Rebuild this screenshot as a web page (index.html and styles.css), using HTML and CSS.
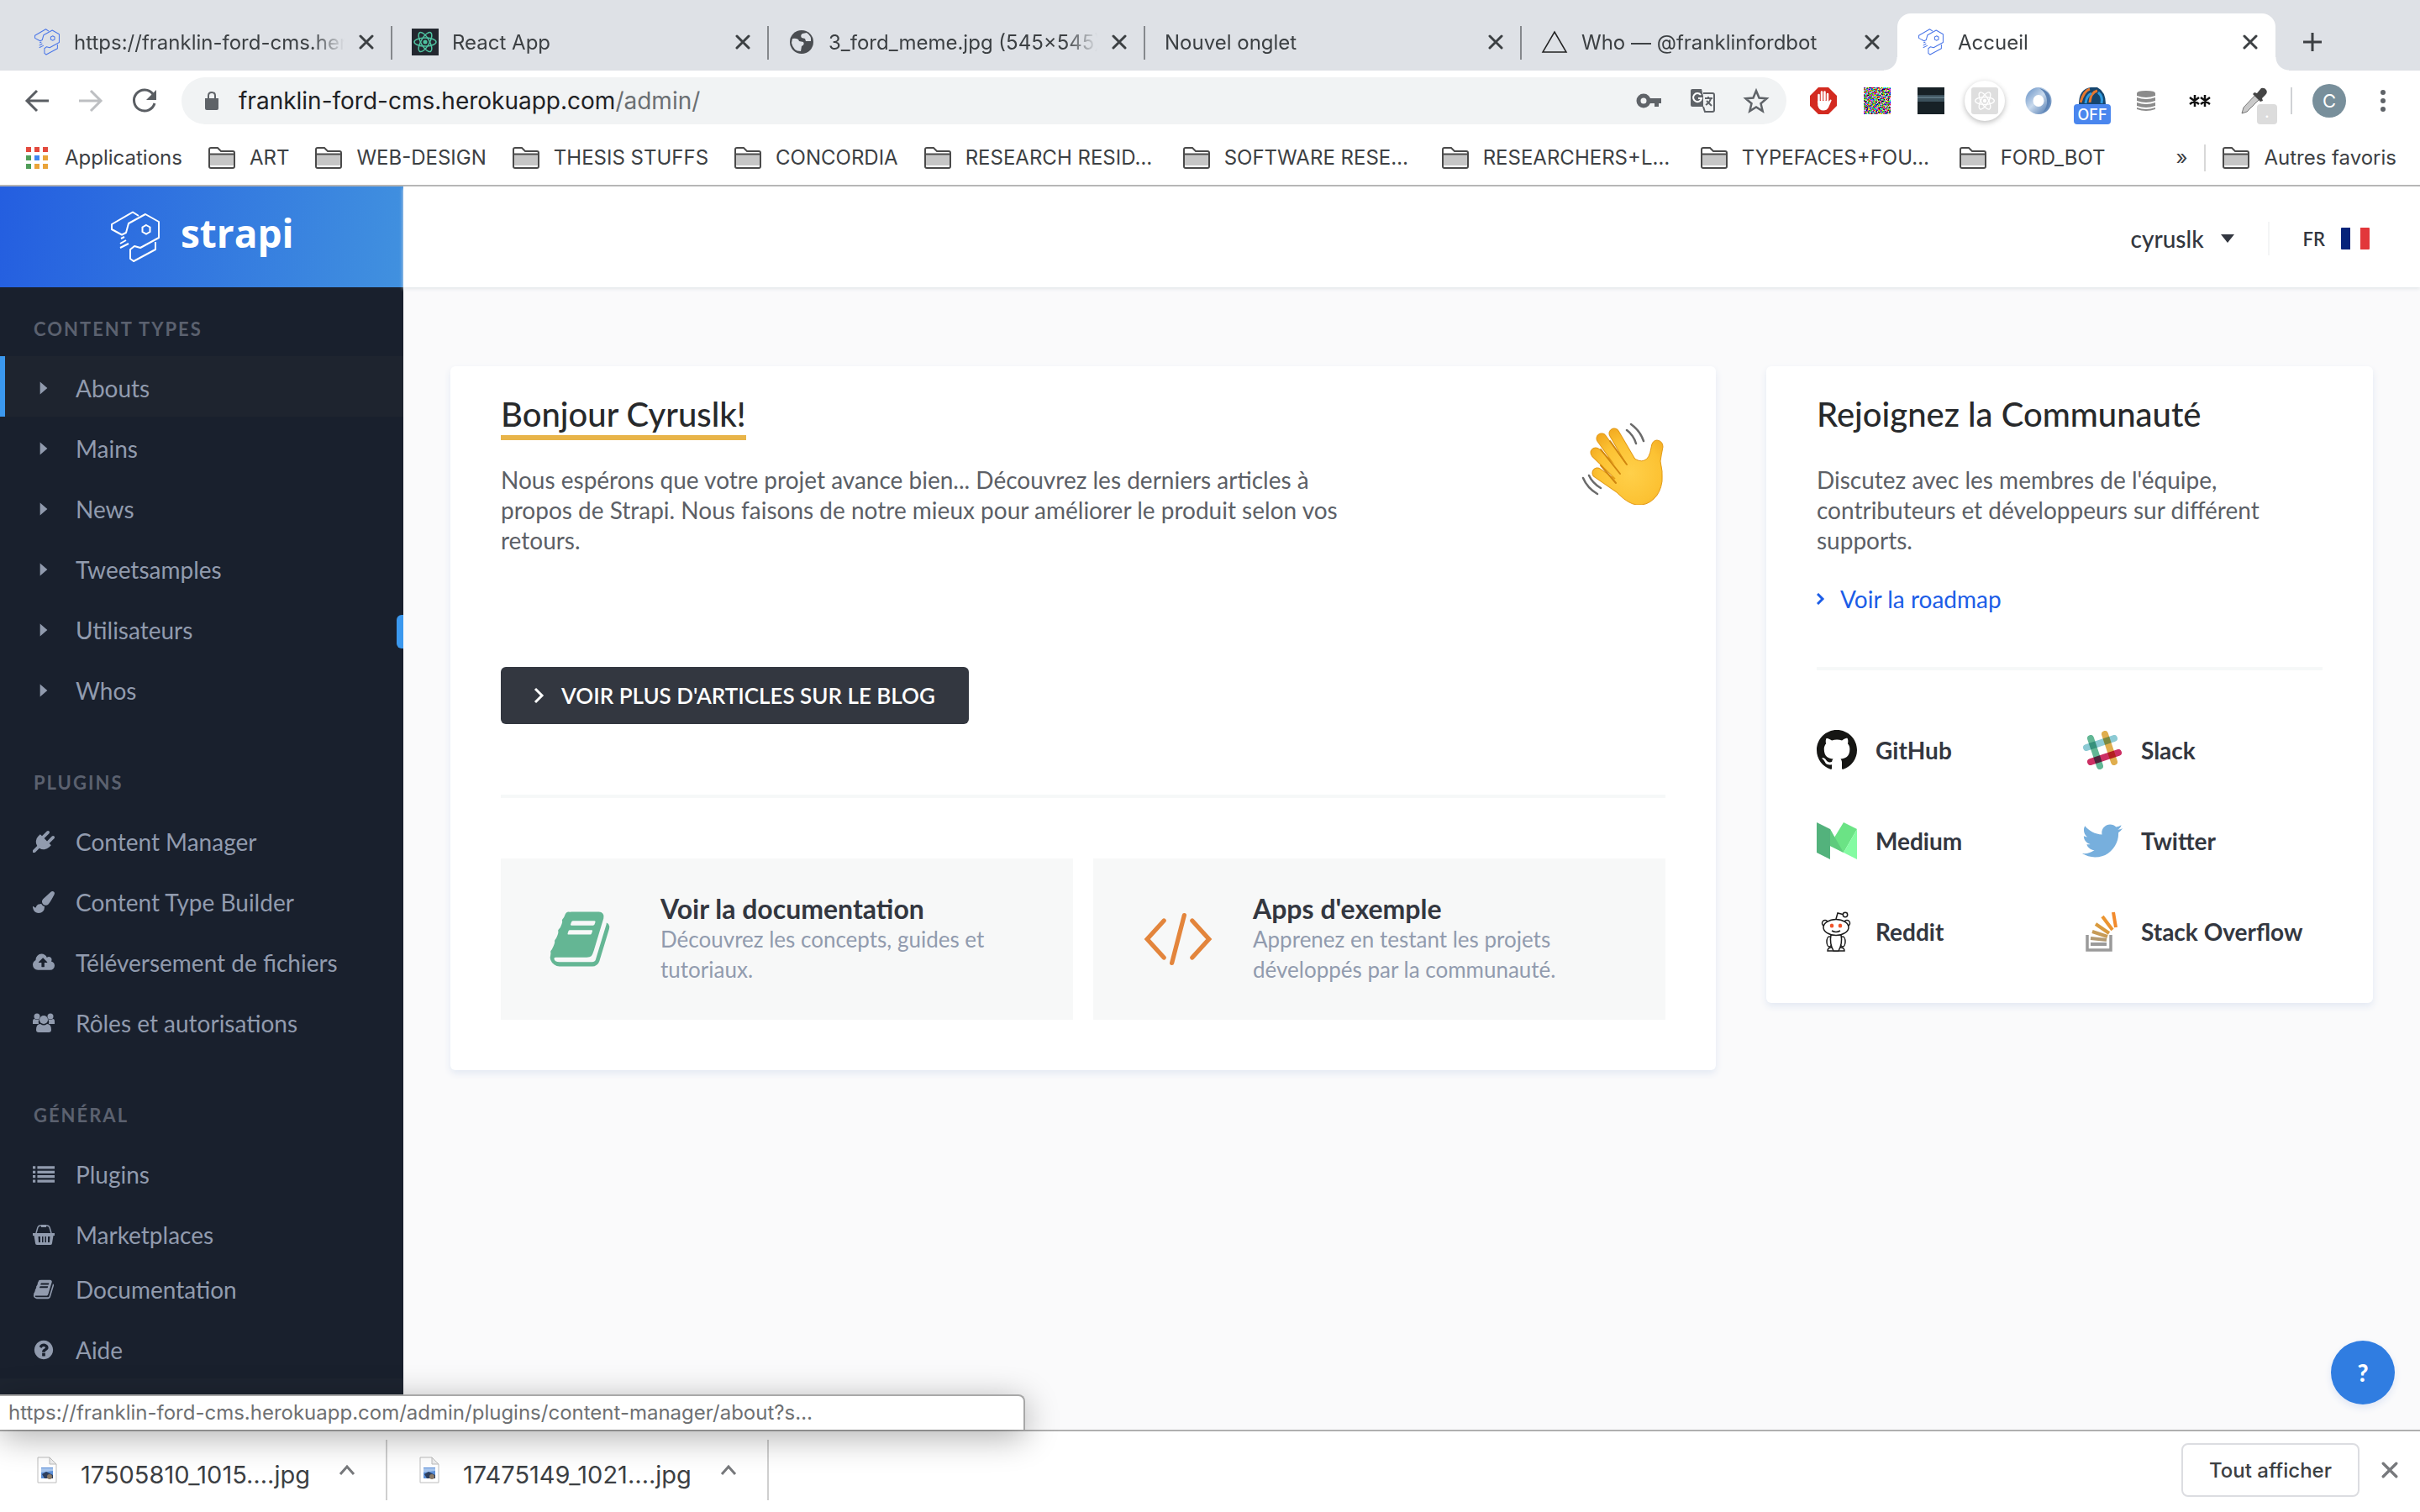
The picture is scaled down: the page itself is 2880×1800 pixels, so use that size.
FILE: index.html
```html
<!DOCTYPE html>
<html lang="fr">
<head>
<meta charset="utf-8">
<meta name="viewport" content="width=device-width, initial-scale=1">
<title>Accueil</title>
<link rel="stylesheet" href="styles.css">
</head>
<body>
<svg class="sprite" aria-hidden="true">
  <defs>
    <symbol id="i-close" viewBox="0 0 18 18"><path d="M2 2l14 14M16 2L2 16" fill="none" stroke="currentColor" stroke-width="3" stroke-linecap="round"/></symbol>
    <symbol id="i-strapi" viewBox="0 0 60 62"><path d="M34 6L27 1.500 2 16V22L14 28.500 19 26 22 15 42 4 58 13V32L36 44 29 42 24 46V57L28 60 54 46V37" fill="none" stroke="currentColor" stroke-width="2" stroke-linejoin="round"/><path d="M43 17l4.500 2.500v5.500L43 27.500 38.500 25v-5.500z" fill="none" stroke="currentColor" stroke-width="2"/><path d="M13 33l4-2M12 39l7-4M12 44l10-5" fill="none" stroke="currentColor" stroke-width="2"/></symbol>
    <symbol id="i-folder" viewBox="0 0 32 26"><path d="M1 3a2 2 0 0 1 2-2h8l4 4h14a2 2 0 0 1 2 2v16a2 2 0 0 1-2 2H3a2 2 0 0 1-2-2z" fill="#fff" stroke="#4a4a4a" stroke-width="2"/><path d="M2 9h28v13H2z" fill="#c6c6c6"/><path d="M1 8.500h30" stroke="#4a4a4a" stroke-width="2"/></symbol>
    <symbol id="i-caret" viewBox="0 0 24 24"><path d="M8 5l8 7-8 7z" fill="currentColor"/></symbol>
    <symbol id="i-plug" viewBox="0 0 1792 1792"><path fill="currentColor" d="M1755 453q37 38 37 90.500t-37 90.500l-401 400 150 150-160 160q-163 163-389.500 186.500t-411.500-100.500l-362 362h-181v-181l362-362q-124-185-100.500-411.500t186.500-389.500l160-160 150 150 400-401q38-37 91-37t90 37 37 90.500-37 90.500l-400 401 234 234 401-400q38-37 91-37t90 37z"/></symbol>
    <symbol id="i-brush" viewBox="0 0 1792 1792"><path fill="currentColor" d="M1615 0q70 0 122.500 46.500t52.500 116.500q0 63-45 151-332 629-465 752-97 91-218 91-126 0-216.500-92.500t-90.500-219.500q0-128 92-212l638-579q59-54 130-54zm-909 1034q39 76 106.500 130t150.500 76l1 71q4 213-129.500 347t-348.500 134q-123 0-218-46.500t-152.500-127.500-86.500-183-29-220q7 5 41 30t62 44.500 59 36.500 46 17q41 0 55-37 25-66 57.500-112.500t69.500-76 88-47.500 103-25.500 125-10.500z"/></symbol>
    <symbol id="i-cloud" viewBox="-64 0 1920 1792"><path fill="currentColor" d="M1216 864q0-14-9-23l-352-352q-9-9-23-9t-23 9l-351 351q-10 12-10 24 0 14 9 23t23 9h224v352q0 13 9.500 22.500t22.500 9.500h192q13 0 22.500-9.500t9.500-22.500v-352h224q13 0 22.500-9.500t9.500-22.500zm640 288q0 159-112.500 271.500t-271.500 112.500h-1088q-185 0-316.500-131.500t-131.500-316.500q0-130 70-240t188-165q-2-30-2-43 0-212 150-362t362-150q156 0 285.500 87t188.500 231q71-62 166-62 106 0 181 75t75 181q0 76-41 138 130 31 213.500 135.500t83.500 238.500z"/></symbol>
    <symbol id="i-users" viewBox="0 0 26 24"><g fill="currentColor"><circle cx="5" cy="4" r="3.500"/><circle cx="21" cy="4" r="3.500"/><path d="M0 13V10q0-3 2-3 3 2 6 0-2 3-1 6zM26 13V10q0-3-2-3-3 2-6 0 2 3 1 6z"/><circle cx="13" cy="8" r="5"/><path d="M4 20q0-7 5-7 4 3 8 0 5 0 5 7 0 3-3 3H7q-3 0-3-3z"/></g></symbol>
    <symbol id="i-list" viewBox="0 0 24 24"><path d="M0 3h3v3H0zM5 3h19v3H5zM0 8h3v3H0zM5 8h19v3H5zM0 13h3v3H0zM5 13h19v3H5zM0 18h3v3H0zM5 18h19v3H5z" fill="currentColor"/></symbol>
    <symbol id="i-basket" viewBox="0 0 26 24"><path d="M0 10h26v3h-1.500l-1.500 9q0 2-2 2H5q-2 0-2-2L1.500 13H0zm6.500 4l.5 7h2v-7zm4.500 0v7h1.500v-7zm3.500 0v7H16v-7zm3.500 0v7h2l.5-7z" fill="currentColor" fill-rule="evenodd"/><path d="M4 10L6 3q1-2 3-2h8q2 0 3 2l2 7" fill="none" stroke="currentColor" stroke-width="1.500"/><path d="M10 0h6v3h-6z" fill="currentColor"/></symbol>
    <symbol id="i-book" viewBox="0 0 1792 1792"><path fill="currentColor" d="M1703 478q40 57 18 129l-275 906q-19 64-76.500 107.500t-122.500 43.500h-923q-77 0-148.500-53.500t-99.500-131.500q-24-67-2-127 0-4 3-27t4-37q1-8-3-21.500t-3-19.500q2-11 8-21t16.500-23.500 16.500-23.500q23-38 45-91.500t30-91.500q3-10 .5-30t-.5-28q3-11 17-28t17-23q21-36 42-92t25-90q1-9-2.500-32t.5-28q4-13 22-30.500t22-22.500q19-26 42.500-84.500t27.500-96.500q1-8-3-25.500t-2-26.500q2-8 9-18t18-23 17-21q8-12 16.500-30.500t15-35 16-36 19.500-32 26.500-23.500 36-11.500 47.500 5.500l-1 3q38-9 51-9h761q74 0 114 56t18 130l-274 906q-36 119-71.500 153.500t-128.500 34.500h-869q-27 0-38 15-11 16-1 43 24 70 144 70h923q29 0 56-15.500t35-41.500l300-987q7-22 5-57 38 15 59 43zm-1064 2q-4 13 2 22.500t20 9.500h608q13 0 25.500-9.500t16.500-22.500l21-64q4-13-2-22.500t-20-9.500h-608q-13 0-25.500 9.500t-16.500 22.500zm-83 256q-4 13 2 22.500t20 9.500h608q13 0 25.500-9.500t16.500-22.500l21-64q4-13-2-22.500t-20-9.500h-608q-13 0-25.500 9.500t-16.500 22.500z"/></symbol>
    <symbol id="i-help" viewBox="0 0 1792 1792"><path fill="currentColor" d="M1024 1376v-192q0-14-9-23t-23-9h-192q-14 0-23 9t-9 23v192q0 14 9 23t23 9h192q14 0 23-9t9-23zm256-672q0-88-55.500-163t-138.500-116-170-41q-243 0-371 213-15 24 8 42l132 100q7 6 19 6 16 0 25-12 53-68 86-92 34-24 86-24 48 0 85.500 26t37.500 59q0 38-20 61t-68 45q-63 28-115.500 86.500t-52.500 125.500v36q0 14 9 23t23 9h192q14 0 23-9t9-23q0-19 21.500-49.500t54.500-49.500q32-18 49-28.500t46-35 44.500-48 28-60.500 12.500-81zm384 192q0 209-103 385.500t-279.500 279.500-385.500 103-385.500-103-279.500-279.500-103-385.500 103-385.500 279.500-279.500 385.500-103 385.500 103 279.500 279.500 103 385.500z"/></symbol>
    <symbol id="i-atom" viewBox="0 0 32 32"><g fill="none" stroke="currentColor" stroke-width="1.500"><ellipse cx="16" cy="16" rx="13" ry="5"/><ellipse cx="16" cy="16" rx="13" ry="5" transform="rotate(60 16 16)"/><ellipse cx="16" cy="16" rx="13" ry="5" transform="rotate(120 16 16)"/></g><circle cx="16" cy="16" r="2.500" fill="currentColor"/></symbol>
    <symbol id="i-jpg" viewBox="0 0 24 32"><path d="M1 1h14l8 8v22H1z" fill="#fff" stroke="#bdbdbd"/><path d="M15 1v8h8z" fill="#eee" stroke="#bdbdbd"/><path d="M5 13h14v13H5z" fill="#5b8fd8"/><path d="M5 14h14v3l-14 2z" fill="#a8c6ee"/><path d="M6 21l5-3 8 4v4H9z" fill="#2d3f5e"/><circle cx="15" cy="24" r="3" fill="#8a7a68"/></symbol>
    <symbol id="i-up" viewBox="0 0 20 14"><path d="M2 12l8-9 8 9" fill="none" stroke="currentColor" stroke-width="3"/></symbol>
    <symbol id="i-chevron" viewBox="0 0 14 20"><path d="M3 2l8 8-8 8" fill="none" stroke="currentColor" stroke-width="3"/></symbol>
  </defs>
</svg>

<div class="window">
  <header class="browser">
    <div class="tabs" role="tablist">
      <div class="tab" role="tab"><svg class="tab-icon strapi-blue"><use href="#i-strapi"/></svg><span class="tab-title">https://franklin-ford-cms.her</span><button class="tab-close" aria-label="Fermer"><svg><use href="#i-close"/></svg></button></div>
      <div class="tab" role="tab"><svg class="tab-icon react-tile"><use href="#i-atom"/></svg><span class="tab-title">React App</span><button class="tab-close" aria-label="Fermer"><svg><use href="#i-close"/></svg></button></div>
      <div class="tab" role="tab"><svg class="tab-icon" viewBox="0 0 32 32"><circle cx="16" cy="16" r="14" fill="#4a4d51"/><path d="M5 12q7-1 8 3l5 1q2 3-2 5l-1 6q-9 0-11-10zM17 6q-3 2-1 5l4 1 1 3 6 0q1-6-5-10z" fill="#dee1e6"/></svg><span class="tab-title">3_ford_meme.jpg (545×545)</span><button class="tab-close" aria-label="Fermer"><svg><use href="#i-close"/></svg></button></div>
      <div class="tab" role="tab"><span class="tab-title">Nouvel onglet</span><button class="tab-close" aria-label="Fermer"><svg><use href="#i-close"/></svg></button></div>
      <div class="tab" role="tab"><svg class="tab-icon" viewBox="0 0 32 32"><path d="M16 4l14 24H2z" fill="none" stroke="#222" stroke-width="1.500"/></svg><span class="tab-title">Who — @franklinfordbot</span><button class="tab-close" aria-label="Fermer"><svg><use href="#i-close"/></svg></button></div>
      <div class="tab tab-active" role="tab" aria-selected="true"><svg class="tab-icon strapi-blue"><use href="#i-strapi"/></svg><span class="tab-title">Accueil</span><button class="tab-close" aria-label="Fermer"><svg><use href="#i-close"/></svg></button></div>
      <button class="new-tab" aria-label="Nouvel onglet"><svg viewBox="0 0 24 24"><path d="M12 1v22M1 12h22" stroke="currentColor" stroke-width="3"/></svg></button>
    </div>

    <div class="toolbar">
      <div class="nav-buttons">
        <button aria-label="Retour"><svg viewBox="0 0 32 32"><path d="M30 16H4M16 4L4 16l12 12" fill="none" stroke="#5a5e63" stroke-width="3"/></svg></button>
        <button aria-label="Avancer"><svg viewBox="0 0 32 32"><path d="M2 16h26M16 4l12 12-12 12" fill="none" stroke="#bdbfc2" stroke-width="3"/></svg></button>
        <button aria-label="Actualiser"><svg viewBox="0 0 32 32"><path d="M26 8A12.500 12.500 0 1 0 28 19" fill="none" stroke="#5a5e63" stroke-width="3"/><path d="M30 3v12H18z" fill="#5a5e63"/></svg></button>
      </div>
      <div class="omnibox">
        <svg class="lock" viewBox="0 0 16 22"><path d="M0 8h16v12q0 2-2 2H2q-2 0-2-2z" fill="#5f6368"/><path d="M4 9V5q0-4 4-4t4 4v4" fill="none" stroke="#5f6368" stroke-width="2"/></svg>
        <a class="url" href="#">franklin-ford-cms.herokuapp.com<span>/admin/</span></a>
        <div class="omni-actions">
          <svg viewBox="0 0 32 32"><circle cx="10" cy="16" r="6" fill="none" stroke="#5f6368" stroke-width="5"/><path d="M16 13h15v6h-3v4h-5v-4h-7z" fill="#5f6368"/></svg>
          <svg viewBox="0 0 32 32"><path d="M4 2h11l5 21H4q-2 0-2-2V4q0-2 2-2z" fill="#5f6368"/><path d="M17 7h11q2 0 2 2v18q0 2-2 2H19l-2-6" fill="#f1f3f4" stroke="#5f6368" stroke-width="2"/><path d="M14 9a5 5 0 1 0 1 4h-4" fill="none" stroke="#fff" stroke-width="2"/><path d="M19 13h9M23 11v2M26 13q-1 5-6 8M21 16l6 6" fill="none" stroke="#5f6368" stroke-width="2"/></svg>
          <svg viewBox="0 0 32 32"><path d="M16 4l3.500 8.500 9 .7-7 6 2.200 9L16 23.400 8.300 28.200l2.200-9-7-6 9-.7z" fill="none" stroke="#5f6368" stroke-width="2.500"/></svg>
        </div>
      </div>
      <div class="extensions">
        <svg viewBox="0 0 32 32"><path d="M10 0h12l10 10v12L22 32H10L0 22V10z" fill="#d32a20"/><path d="M10.500 18V9M14 15V5.500M17.500 15V5.500M21 17V8" stroke="#fff" stroke-width="2.500" stroke-linecap="round"/><path d="M9.250 16h13v1l2-2.500q2 0 1 2L22 24q-2 3.500-6 3.500-5.500 0-6.750-6z" fill="#fff"/></svg>
        <svg viewBox="0 0 32 32"><filter id="noise" x="0" y="0" width="1" height="1" color-interpolation-filters="sRGB"><feTurbulence type="fractalNoise" baseFrequency=".55" numOctaves="2"/><feColorMatrix values="4 0 0 0 -1.500 0 4 0 0 -1.500 0 0 4 0 -1.500 0 0 0 0 1"/></filter><rect width="32" height="32" filter="url(#noise)"/></svg>
        <svg viewBox="0 0 32 32"><rect width="32" height="32" fill="#172126"/><rect y="9" width="32" height="8" fill="#3b505b"/><rect y="11" width="32" height="2" fill="#5b7480"/></svg>
        <svg class="ext-round" viewBox="0 0 48 48"><rect x="8" y="8" width="32" height="32" rx="3" fill="#dedede"/><use href="#i-atom" x="10" y="10" width="28" height="28" color="#fff"/></svg>
        <svg viewBox="0 0 32 32"><defs><linearGradient id="ring" x1="0" y1="0" x2="1" y2="1"><stop offset="0" stop-color="#7fa3cf"/><stop offset=".45" stop-color="#c9daed"/><stop offset="1" stop-color="#5f86b8"/></linearGradient></defs><ellipse cx="16" cy="16" rx="11" ry="11.500" fill="none" stroke="url(#ring)" stroke-width="9"/><path d="M17 1q14 3 13 16-2 9-9 13 6-7 5-15-1-9-9-14z" fill="#5b82b4"/></svg>
        <span class="ext-badged"><svg viewBox="0 0 32 20"><path d="M0 20Q0 2 14 0h8q10 5 10 20z" fill="#15466f"/><path d="M2 18q4-14 11-16M13 18q1-12 9-14" fill="none" stroke="#e8772d" stroke-width="3"/><path d="M8 19q1-9 7-12M23 6q6 5 4 13" fill="none" stroke="#2f9be0" stroke-width="3"/></svg><b>OFF</b></span>
        <svg viewBox="0 0 32 32"><g fill="#8b8b8b"><path d="M5 7q0-3 11-3t11 3v3q-11 4-22 0zM5 12q11 4 22 0v4q-11 4-22 0zM5 18q11 4 22 0v4q-11 4-22 0zM5 24q11 4 22 0v2q-11 4-22 0z"/></g></svg>
        <svg viewBox="0 0 32 32"><path d="M10 9v14M4 12l11 8M15 12L4 20M22 9v14M17 12l11 8M28 12l-11 8" stroke="#111" stroke-width="2.500"/></svg>
        <span class="ext-picker"><svg viewBox="0 0 32 32"><path d="M19 8l5 5L8 29l-6 2 2-7z" fill="#c9c9c9" stroke="#777"/><path d="M17 6l3 1 5-6q4-1 6 2t-1 6l-4 4 1 3-3 1-9-9z" fill="#444"/></svg><i>.</i></span>
      </div>
      <div class="profile"><span class="avatar">C</span><svg viewBox="0 0 32 32"><g fill="#5f6368"><circle cx="16" cy="6" r="3"/><circle cx="16" cy="16" r="3"/><circle cx="16" cy="26" r="3"/></g></svg></div>
    </div>

    <nav class="bookmarks">
      <a class="bookmark apps" href="#"><svg viewBox="0 0 26 26"><g fill="#e34a3e"><path d="M0 0h6v6H0zM10 0h6v6h-6zM20 0h6v6h-6z"/></g><path d="M0 10h6v6H0zM0 20h6v6H0z" fill="#4f9d58"/><path d="M10 10h6v6h-6z" fill="#3f86f0"/><path d="M20 10h6v6h-6zM10 20h6v6h-6zM20 20h6v6h-6z" fill="#eaa43a"/></svg><span>Applications</span></a>
      <a class="bookmark" href="#"><svg><use href="#i-folder"/></svg><span>ART</span></a>
      <a class="bookmark" href="#"><svg><use href="#i-folder"/></svg><span>WEB-DESIGN</span></a>
      <a class="bookmark" href="#"><svg><use href="#i-folder"/></svg><span>THESIS STUFFS</span></a>
      <a class="bookmark" href="#"><svg><use href="#i-folder"/></svg><span>CONCORDIA</span></a>
      <a class="bookmark long" href="#"><svg><use href="#i-folder"/></svg><span>RESEARCH RESID…</span></a>
      <a class="bookmark long" href="#"><svg><use href="#i-folder"/></svg><span>SOFTWARE RESE…</span></a>
      <a class="bookmark long" href="#"><svg><use href="#i-folder"/></svg><span>RESEARCHERS+L…</span></a>
      <a class="bookmark long" href="#"><svg><use href="#i-folder"/></svg><span>TYPEFACES+FOU…</span></a>
      <a class="bookmark" href="#"><svg><use href="#i-folder"/></svg><span>FORD_BOT</span></a>
      <div class="bookmarks-end"><button class="more">»</button><a class="bookmark" href="#"><svg><use href="#i-folder"/></svg><span>Autres favoris</span></a></div>
    </nav>
  </header>

  <div class="page">
    <aside class="sidebar">
      <a class="brand" href="#"><svg><use href="#i-strapi"/></svg><span>strapi</span></a>
      <nav class="menu">
        <h2>Content Types</h2>
        <ul>
          <li><a class="current" href="#"><svg><use href="#i-caret"/></svg>Abouts</a></li>
          <li><a href="#"><svg><use href="#i-caret"/></svg>Mains</a></li>
          <li><a href="#"><svg><use href="#i-caret"/></svg>News</a></li>
          <li><a href="#"><svg><use href="#i-caret"/></svg>Tweetsamples</a></li>
          <li><a href="#"><svg><use href="#i-caret"/></svg>Utilisateurs</a><i class="handle"></i></li>
          <li><a href="#"><svg><use href="#i-caret"/></svg>Whos</a></li>
        </ul>
        <h2>Plugins</h2>
        <ul>
          <li><a href="#"><svg><use href="#i-plug"/></svg>Content Manager</a></li>
          <li><a href="#"><svg><use href="#i-brush"/></svg>Content Type Builder</a></li>
          <li><a href="#"><svg><use href="#i-cloud"/></svg>Téléversement de fichiers</a></li>
          <li><a href="#"><svg><use href="#i-users"/></svg>Rôles et autorisations</a></li>
        </ul>
        <h2>Général</h2>
        <ul>
          <li><a href="#"><svg><use href="#i-list"/></svg>Plugins</a></li>
          <li><a href="#"><svg><use href="#i-basket"/></svg>Marketplaces</a></li>
        </ul>
        <ul class="static-links">
          <li><a href="#"><svg><use href="#i-book"/></svg>Documentation</a></li>
          <li><a href="#"><svg><use href="#i-help"/></svg>Aide</a></li>
        </ul>
      </nav>
      <div class="sidebar-foot"></div>
    </aside>

    <div class="admin">
      <header class="topbar">
        <button class="user">cyruslk<svg viewBox="0 0 16 10"><path d="M0 0h16L8 10z" fill="currentColor"/></svg></button>
        <button class="locale">FR<svg viewBox="0 0 34 26"><path d="M1 0h10v26H1q-1 0-1-1V1q0-1 1-1z" fill="#06247a"/><path d="M23 0h10q1 0 1 1v24q0 1-1 1H23z" fill="#e2373b"/></svg></button>
      </header>
      <main class="content">
        <section class="card welcome">
          <svg class="wave" viewBox="0 0 98 98">
            <defs><radialGradient id="skin" gradientUnits="userSpaceOnUse" cx="58" cy="60" r="62"><stop offset="0" stop-color="#ffd04a"/><stop offset=".6" stop-color="#fcc233"/><stop offset="1" stop-color="#f0a41c"/></radialGradient></defs>
            <g fill="none" stroke-linecap="round" stroke="#e39a17" stroke-width="13"><path d="M39 13L63 54M24 19L55 62M17 36L50 68M19 60L48 80"/></g>
            <path d="M59 40q10 8 16 5 6-2 8-15 1-9 7-9 7 1 7 8-2 10-3 17 3 12 2 24-2 14-10 21-8 8-20 7-10-1-22-13l-10-10z" fill="url(#skin)" stroke="#e39a17" stroke-width="1"/>
            <g fill="none" stroke-linecap="round" stroke="url(#skin)" stroke-width="11"><path d="M39 13L63 54M24 19L55 62M17 36L50 68M19 60L48 80"/></g>
            <g fill="none" stroke="#d0860f" stroke-width="2" stroke-linecap="round"><path d="M34 22L54 50M23 32L46 61M23 51L41 72"/></g>
            <g fill="none" stroke="#6b6b6b" stroke-width="2.500" stroke-linecap="round"><path d="M54 9q8 6 11 16M59 2q11 8 15 20M2 66q5 12 17 19M9 63q4 9 14 15"/></g>
          </svg>
          <h1><span>Bonjour Cyruslk!</span></h1>
          <p class="lead">Nous espérons que votre projet avance bien... Découvrez les derniers articles à propos de Strapi. Nous faisons de notre mieux pour améliorer le produit selon vos retours.</p>
          <a class="blog-button" href="#"><svg><use href="#i-chevron"/></svg>VOIR PLUS D'ARTICLES SUR LE BLOG</a>
          <hr>
          <div class="blocks">
            <a class="block" href="#"><svg class="green"><use href="#i-book"/></svg><div><h2>Voir la documentation</h2><p>Découvrez les concepts, guides et tutoriaux.</p></div></a>
            <a class="block" href="#"><svg class="orange" viewBox="0 0 78 60"><path d="M23 9L4 30l19 21M55 9l19 21-19 21M46 3L32 57" fill="none" stroke="currentColor" stroke-width="5" stroke-linecap="round"/></svg><div><h2>Apps d'exemple</h2><p>Apprenez en testant les projets développés par la communauté.</p></div></a>
          </div>
        </section>

        <section class="card community">
          <h1>Rejoignez la Communauté</h1>
          <p class="lead">Discutez avec les membres de l'équipe, contributeurs et développeurs sur différent supports.</p>
          <a class="roadmap" href="#"><svg viewBox="0 0 10 14"><path d="M1 1l6 6-6 6" fill="none" stroke="currentColor" stroke-width="3"/></svg>Voir la roadmap</a>
          <hr>
          <div class="social">
            <a href="#"><svg viewBox="0 0 16 16"><path fill="#161614" d="M8 0C3.580 0 0 3.580 0 8c0 3.540 2.290 6.530 5.470 7.590.4.070.55-.17.55-.38 0-.19-.01-.82-.01-1.490-2.010.37-2.530-.49-2.690-.94-.09-.23-.48-.94-.82-1.130-.28-.15-.68-.52-.01-.53.63-.01 1.080.58 1.230.82.72 1.210 1.870.87 2.330.66.07-.52.28-.87.51-1.070-1.780-.2-3.640-.89-3.640-3.950 0-.87.31-1.590.82-2.150-.08-.2-.36-1.020.08-2.120 0 0 .67-.21 2.200.82.64-.18 1.320-.27 2-.27s1.360.09 2 .27c1.530-1.040 2.200-.82 2.200-.82.44 1.100.16 1.920.08 2.120.51.56.82 1.270.82 2.150 0 3.070-1.870 3.750-3.650 3.950.29.25.54.73.54 1.480 0 1.070-.01 1.930-.01 2.200 0 .21.15.46.55.38A8.010 8.010 0 0 0 16 8c0-4.420-3.580-8-8-8z"/></svg>GitHub</a>
            <a href="#"><svg class="slack" viewBox="0 0 48 48"><g fill="none" stroke-width="8" stroke-linecap="round"><path d="M10 10L21 43" stroke="#62b795"/><path d="M27 5L38 38" stroke="#e0ae4e"/><path d="M5 21L38 10" stroke="#8ccad4"/><path d="M10 38L43 27" stroke="#cc2f63"/></g></svg>Slack</a>
            <a href="#"><svg viewBox="0 -2 48 48"><path d="M0 0l16 8v36L0 36z" fill="#53b27c"/><path d="M32 0l16 8-16 28-16-8V8l5 10z" fill="#6be385"/><path d="M16 8l16 28-16-8z" fill="#5fcb7d"/><path d="M48 8v36l-16-8z" fill="#84fba2"/></svg>Medium</a>
            <a href="#"><svg viewBox="0 0 24 24"><path fill="#77afdd" d="M23.954 4.569c-.885.389-1.830.654-2.825.775 1.014-.611 1.794-1.574 2.163-2.723-.951.555-2.005.959-3.127 1.184-.896-.959-2.173-1.559-3.591-1.559-2.717 0-4.920 2.203-4.920 4.917 0 .39.045.765.127 1.124C7.691 8.094 4.066 6.130 1.640 3.161c-.427.722-.666 1.561-.666 2.475 0 1.710.87 3.213 2.188 4.096-.807-.026-1.566-.248-2.228-.616v.061c0 2.385 1.693 4.374 3.946 4.827-.413.111-.849.171-1.296.171-.314 0-.615-.03-.916-.086.631 1.953 2.445 3.377 4.604 3.417-1.680 1.319-3.809 2.105-6.102 2.105-.39 0-.779-.023-1.170-.067 2.189 1.394 4.768 2.209 7.557 2.209 9.054 0 13.999-7.496 13.999-13.986 0-.209 0-.42-.015-.63.961-.689 1.800-1.560 2.460-2.548l-.047-.02z"/></svg>Twitter</a>
            <a href="#"><svg viewBox="0 0 48 48"><g fill="#fff" stroke="#1a1a1a" stroke-width="1.500"><circle cx="10" cy="14" r="3.500"/><circle cx="36" cy="14" r="3.500"/><ellipse cx="15" cy="36" rx="3" ry="6"/><ellipse cx="31" cy="36" rx="3" ry="6"/><path d="M13 47q0-4 5-4h10q5 0 5 4z"/><path d="M17 28h12q2 10-3 19h-6q-5-9-3-19z"/><ellipse cx="23" cy="19" rx="15" ry="9.500"/><path d="M23 9l2-7 6 1.500" fill="none"/><circle cx="34" cy="4" r="2.700"/><path d="M18 23q5 3 10 0" fill="none"/></g><g fill="#f0552b"><ellipse cx="18" cy="17" rx="2.300" ry="2.500"/><ellipse cx="28" cy="17" rx="2.300" ry="2.500"/></g></svg>Reddit</a>
            <a href="#"><svg viewBox="0 0 48 48"><g fill="none" stroke-width="4"><path d="M6 28v18h28V28" stroke="#9a9a9a" stroke-width="3.500"/><path d="M10 39h19" stroke="#9a9a9a"/><path d="M10 32l19 2" stroke="#b39a72"/><path d="M12 24l18 6" stroke="#c79b56"/><path d="M16 15l16 11" stroke="#d99a3e"/><path d="M24 6l12 16" stroke="#eb9430"/><path d="M37 1l3 18" stroke="#f28a2c"/></g></svg>Stack Overflow</a>
          </div>
        </section>
      </main>
    </div>
    <button class="fab" aria-label="Aide">?</button>
    <div class="status">https://franklin-ford-cms.herokuapp.com/admin/plugins/content-manager/about?s…</div>
  </div>

  <footer class="downloads">
    <div class="download"><svg class="file"><use href="#i-jpg"/></svg><a href="#">17505810_1015….jpg</a><button aria-label="Options"><svg><use href="#i-up"/></svg></button></div>
    <div class="download"><svg class="file"><use href="#i-jpg"/></svg><a href="#">17475149_1021….jpg</a><button aria-label="Options"><svg><use href="#i-up"/></svg></button></div>
    <button class="show-all">Tout afficher</button>
    <button class="dismiss" aria-label="Fermer"><svg><use href="#i-close"/></svg></button>
  </footer>
</div>
</body>
</html>
```

FILE: styles.css
```css
* { box-sizing: border-box; }
body { margin: 0; background: #fafafb; font-family: Lato, "Open Sans", sans-serif; }
h1, h2, p, ul { margin: 0; padding: 0; font-weight: 400; }
ul { list-style: none; }
a { color: inherit; text-decoration: none; }
button { margin: 0; padding: 0; border: 0; background: none; color: inherit; font: inherit; cursor: pointer; }
svg { display: block; flex: none; }
hr { margin: 0; border: 0; height: 4px; background: #f6f8f8; }
.sprite { position: absolute; width: 0; height: 0; }

.window { display: flex; flex-direction: column; min-height: 100vh; }
.browser, .status, .downloads { font-family: Inter, Roboto, sans-serif; }
.browser { border-bottom: 2px solid #b3b3b3; background: #fff; color: #3c4043; }

/* Tab strip */
.tabs { display: flex; height: 84px; padding: 16px 18px 0; background: #dee1e6; font-size: 24px; }
.tab { position: relative; display: flex; flex: 0 1 448px; align-items: center; gap: 16px; min-width: 0; padding: 0 20px 0 24px; }
.tab:first-child { padding-left: 22px; }
.tab:nth-child(-n+4)::after { content: ""; position: absolute; right: -1px; top: 15px; width: 2px; height: 40px; background: #85888c; }
.tab-icon { width: 32px; height: 32px; }
.strapi-blue { color: #4a76e8; }
.react-tile { background: #23272f; color: #4fc3a1; }
.tab-title { flex: 1; overflow: hidden; white-space: nowrap; -webkit-mask-image: linear-gradient(90deg, #000 88%, transparent); mask-image: linear-gradient(90deg, #000 88%, transparent); }
.tab-close { display: flex; width: 20px; height: 20px; align-items: center; justify-content: center; }
.tab-close svg { width: 18px; height: 18px; }
.tab-active { flex-basis: 450px; border-radius: 16px 16px 0 0; background: #fff; }
.tab-active::before, .tab-active::after { content: ""; position: absolute; bottom: 0; width: 16px; height: 16px; }
.tab-active::before { left: -16px; background: radial-gradient(circle at 0 0, transparent 15px, #fff 16px); }
.tab-active::after { right: -16px; background: radial-gradient(circle at 100% 0, transparent 15px, #fff 16px); }
.new-tab { width: 24px; margin-left: 32px; }
.new-tab svg { width: 24px; height: 24px; }

/* Toolbar */
.toolbar { display: flex; align-items: center; height: 72px; padding: 0 28px; }
.toolbar svg { width: 32px; height: 32px; }
.nav-buttons { display: flex; gap: 32px; margin-right: 28px; }
.omnibox { display: flex; flex: 1; align-items: center; min-width: 0; height: 56px; padding: 0 20px 0 28px; border-radius: 28px; background: #f1f3f4; font-size: 28px; }
.omnibox .lock { width: 16px; height: 22px; margin-right: 24px; }
.url { flex: 1; color: #202124; }
.url span { color: #6b6f73; }
.omni-actions { display: flex; gap: 32px; }
.extensions { display: flex; align-items: center; gap: 32px; margin-left: 28px; }
.toolbar .ext-round { width: 48px; height: 48px; margin: 0 -8px; border-radius: 50%; background: #fff; box-shadow: 0 2px 6px #0004; }
.ext-badged, .ext-picker { position: relative; width: 32px; height: 32px; }
.toolbar .ext-badged svg { height: 20px; }
.ext-badged b { position: absolute; left: -6px; top: 20px; width: 44px; height: 24px; border-radius: 4px; background: #4a86ee; color: #fff; font-size: 18px; font-weight: 500; line-height: 26px; text-align: center; }
.ext-picker i { position: absolute; left: 20px; top: 20px; width: 24px; height: 24px; border-radius: 4px; background: #dcdcdc; color: #fff; font-size: 20px; font-style: normal; line-height: 18px; text-align: center; }
.profile { display: flex; align-items: center; gap: 28px; height: 32px; margin-left: 28px; padding-left: 24px; border-left: 2px solid #d0d2d5; }
.avatar { width: 40px; height: 40px; border-radius: 50%; background: #788f9b; color: #fff; font-size: 22px; line-height: 40px; text-align: center; }

/* Bookmarks */
.bookmarks { display: flex; align-items: center; gap: 31px; height: 64px; padding: 0 28px 0 31px; font-size: 24px; line-height: 32px; }
.bookmark { display: flex; align-items: center; gap: 17px; white-space: nowrap; }
.bookmark svg { width: 32px; height: 26px; }
.bookmark.apps { gap: 20px; }
.bookmark.apps svg { width: 26px; }
.bookmark.long { width: 277px; }
.bookmarks-end { display: flex; align-items: center; gap: 20px; margin-left: auto; }
.bookmarks-end .bookmark { padding: 0 0 0 20px; border-left: 2px solid #d8d8d8; }

/* Admin shell */
.page { position: relative; display: grid; flex: 1; grid-template-columns: 480px 1fr; }
.sidebar { display: flex; flex-direction: column; background: #19202d; color: #919bae; }
.brand { display: flex; align-items: center; gap: 24px; height: 120px; padding: 0 0 0 131px; background: linear-gradient(100deg, #245ee0, #4191df); color: #fff; font: 700 46px/60px "Open Sans", sans-serif; }
.brand svg { width: 60px; height: 62px; }
.brand span { padding-bottom: 10px; }
.menu h2 { padding: 36px 40px 18px; color: #5b616f; font-size: 22px; font-weight: 700; letter-spacing: 2px; line-height: 28px; text-transform: uppercase; }
.menu ul + h2 { padding-top: 62px; }
.menu li { position: relative; }
.menu a { display: flex; align-items: center; gap: 25px; height: 72px; padding: 4px 0 0 39px; font-size: 28px; line-height: 36px; }
.menu svg { width: 26px; height: 26px; }
.menu a.current { padding-left: 33px; border-left: 6px solid #3b98ee; background: #1e242f; }
.menu .static-links { margin-top: -7px; }
.handle { position: absolute; right: 0; top: 20px; width: 8px; height: 40px; border-radius: 6px 0 0 6px; background: #3b98ee; }
.sidebar-foot { flex: 1; background: #1d2430; }

.topbar { display: flex; align-items: center; justify-content: flex-end; height: 120px; padding: 4px 60px 0 0; background: #fff; box-shadow: 0 2px 4px #e3e6ea; color: #333740; }
.user { display: flex; align-items: center; gap: 20px; height: 40px; padding-right: 40px; border-right: 2px solid #f4f5f6; font-size: 28px; font-weight: 500; }
.user svg { width: 16px; height: 10px; }
.locale { display: flex; align-items: center; gap: 19px; padding-left: 40px; font-size: 22px; font-weight: 600; }
.locale svg { width: 34px; height: 26px; }

.content { display: grid; grid-template-columns: 1506fr 722fr; align-items: start; gap: 60px; padding: 94px 56px; }
.card { position: relative; padding: 34px 60px 60px; border-radius: 6px; background: #fff; box-shadow: 0 4px 8px #e3e9f3; }
.card h1 { color: #27292b; font-size: 40px; font-weight: 500; line-height: 46px; }
.welcome h1 span { display: inline-block; padding-bottom: 2px; border-bottom: 6px solid #e8b449; }
.lead { max-width: 1020px; color: #5c5f66; font-size: 28px; line-height: 36px; }
.welcome .lead { margin-top: 29px; }
.community .lead { margin-top: 37px; }
.wave { position: absolute; right: 62px; top: 67px; width: 98px; height: 98px; }
.blog-button { display: inline-flex; align-items: center; gap: 20px; height: 68px; margin-top: 133px; padding: 0 40px 0 38px; border-radius: 6px; background: #333740; color: #fff; font-size: 26px; font-weight: 600; }
.blog-button svg { width: 14px; height: 20px; }
.welcome hr { margin-top: 84px; }
.blocks { display: grid; grid-template-columns: 1fr 1fr; gap: 24px; margin-top: 72px; }
.block { display: flex; align-items: center; gap: 48px; height: 192px; padding: 0 60px; background: #f7f8f8; }
.block svg { width: 82px; height: 76px; }
.block .green { width: 76px; margin: 0 10px 0 -4px; color: #64b694; }
.block .orange { color: #e3853c; }
.block h2 { color: #333740; font-size: 32px; font-weight: 700; line-height: 36px; }
.block p { color: #919bae; font-size: 26px; line-height: 36px; }

.community { padding-bottom: 31px; }
.roadmap { display: flex; align-items: center; gap: 18px; margin-top: 34px; color: #1c5de7; font-size: 28px; line-height: 36px; }
.roadmap svg { width: 10px; height: 14px; }
.community hr { margin-top: 63px; }
.social { display: grid; grid-template-columns: 316px 1fr; grid-auto-rows: 108px; margin-top: 41px; }
.social a { display: flex; align-items: center; gap: 22px; color: #333740; font-size: 28px; font-weight: 700; white-space: nowrap; }
.social svg { width: 48px; height: 48px; }
.slack { isolation: isolate; }
.slack path { mix-blend-mode: multiply; }

.fab { position: absolute; right: 30px; bottom: 30px; width: 76px; height: 76px; border-radius: 50%; background: #307de1; box-shadow: 0 4px 8px #dfe6f5; color: #fff; font-size: 28px; font-weight: 900; }
.status { position: absolute; left: 0; bottom: 0; z-index: 1; width: 1220px; height: 42px; padding-left: 10px; border: solid #a8a8a8; border-width: 2px 2px 0 0; border-radius: 0 8px 0 0; background: #fff; box-shadow: 0 8px 40px #0005; color: #6e7072; font-size: 24px; line-height: 40px; }

/* Download shelf */
.downloads { display: flex; align-items: center; height: 98px; padding: 0 26px 4px 6px; border-top: 2px solid #b0b0b0; background: #fff; color: #3c4043; }
.download { display: flex; align-items: center; gap: 28px; height: 72px; padding: 0 36px 0 38px; border-right: 2px solid #cfcfcf; font-size: 29px; }
.download .file { width: 24px; height: 32px; }
.download a { padding-top: 10px; }
.download button { margin-left: 6px; color: #77797c; }
.download button svg { width: 20px; height: 14px; }
.show-all { height: 64px; margin-left: auto; padding: 0 31px; border: 2px solid #dcdde1; border-radius: 8px; font-size: 24px; font-weight: 500; }
.dismiss { margin-left: 26px; color: #77797c; }
.dismiss svg { width: 20px; height: 20px; }
```
